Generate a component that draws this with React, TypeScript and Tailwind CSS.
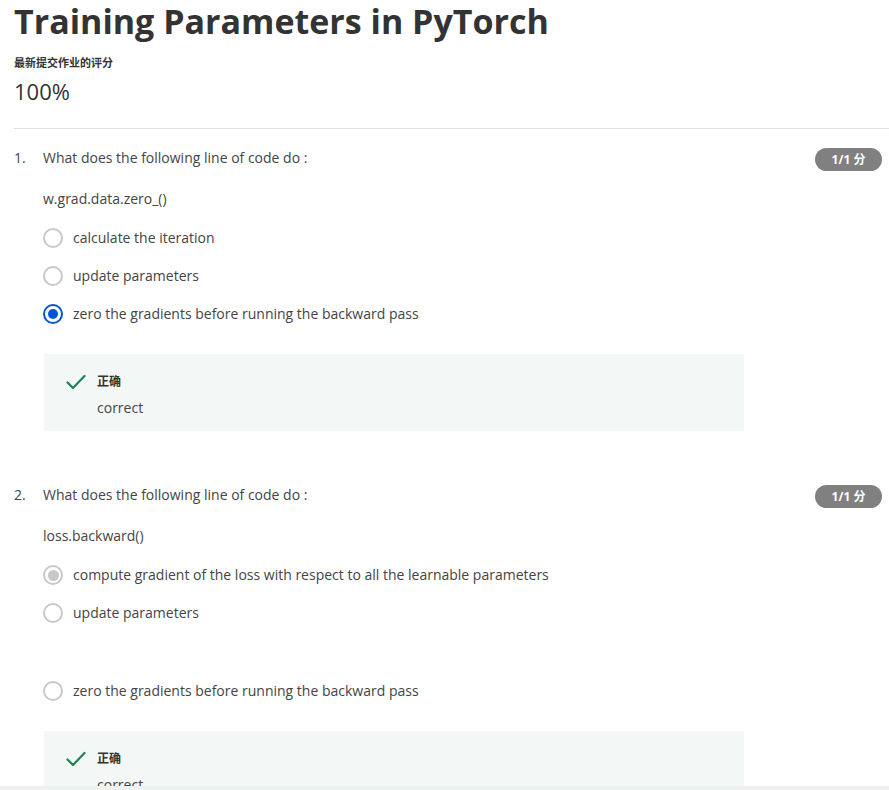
import React from "react";

type Option = { label: string; state?: "selected" | "disabled-selected"; extraTop?: boolean };

type Question = {
  num: number;
  prompt: string;
  code: string;
  options: Option[];
};

const questions: Question[] = [
  {
    num: 1,
    prompt: "What does the following line of code do :",
    code: "w.grad.data.zero_()",
    options: [
      { label: "calculate the iteration" },
      { label: "update parameters" },
      { label: "zero the gradients before running the backward pass", state: "selected" },
    ],
  },
  {
    num: 2,
    prompt: "What does the following line of code do :",
    code: "loss.backward()",
    options: [
      { label: "compute gradient of the loss with respect to all the learnable parameters", state: "disabled-selected" },
      { label: "update parameters" },
      { label: "zero the gradients before running the backward pass", extraTop: true },
    ],
  },
];

function Radio({ state }: { state?: Option["state"] }) {
  if (state === "selected") {
    return (
      <span className="w-5 h-5 rounded-full border-2 border-[#0056d2] flex items-center justify-center shrink-0">
        <span className="w-[10px] h-[10px] rounded-full bg-[#0056d2]" />
      </span>
    );
  }
  if (state === "disabled-selected") {
    return (
      <span className="w-5 h-5 rounded-full border-2 border-[#c8c8c8] flex items-center justify-center shrink-0">
        <span className="w-[11px] h-[11px] rounded-full bg-[#c8c8c8]" />
      </span>
    );
  }
  return <span className="w-5 h-5 rounded-full border-2 border-[#c8c8c8] bg-white shrink-0" />;
}

function Feedback() {
  return (
    <div className="mt-[30px] ml-px w-[700px] h-[77px] bg-[#f3f8f6] pl-[22px] pt-[19px] flex gap-[11px]">
      <svg width="20" height="16" viewBox="0 0 20 16" className="mt-px shrink-0">
        <path d="M1.5 8.5 L7 14 L18.5 2" fill="none" stroke="#1f8354" strokeWidth="2.2" strokeLinecap="round" strokeLinejoin="round" />
      </svg>
      <div>
        <div className="text-[12px] leading-[18px] font-bold text-[#333]">正确</div>
        <div className="text-[14px] leading-[20px] mt-[7px] text-[#444]">correct</div>
      </div>
    </div>
  );
}

function QuestionBlock({ q, first }: { q: Question; first: boolean }) {
  return (
    <div className={first ? "mt-[19px]" : "mt-[54px]"}>
      <div className="flex items-start pr-[7px]">
        <span className="w-[29px] text-[14px] leading-[20px] text-[#444] shrink-0">{q.num}.</span>
        <span className="flex-1 text-[14px] leading-[20px] text-[#444]">{q.prompt}</span>
        <span className="w-[67px] h-[23px] rounded-full bg-[#808080] text-white text-[12px] font-bold flex items-center justify-center">
          1/1 分
        </span>
      </div>
      <div className="ml-[29px]">
        <p className="mt-[18px] text-[14px] leading-[20px] text-[#444]">{q.code}</p>
        <div className="mt-[19px] flex flex-col gap-[18px]">
          {q.options.map((o) => (
            <label
              key={o.label}
              className={"flex items-center gap-[10px] h-5 " + (o.extraTop ? "mt-[40px]" : "")}
            >
              <Radio state={o.state} />
              <span className="text-[14px] leading-[20px] text-[#444]">{o.label}</span>
            </label>
          ))}
        </div>
        <Feedback />
      </div>
    </div>
  );
}

export default function App() {
  return (
    <div
      className="w-[889px] h-[790px] overflow-hidden flex flex-col bg-white"
      style={{ fontFamily: '"Open Sans", "Noto Sans CJK SC", sans-serif' }}
    >
      <div className="h-[786px] overflow-hidden pl-[14px]">
        <h1 className="text-[34px] leading-[42px] font-bold text-[#333]">
          Training Parameters in PyTorch
        </h1>
        <div className="mt-[13px] text-[11px] leading-[16px] font-bold text-[#333]">最新提交作业的评分</div>
        <div className="mt-[5px] text-[22px] leading-[30px] text-[#333]">100%</div>
        <div className="mt-[22px] border-t border-[#e1e1e1]" />
        {questions.map((q, i) => (
          <QuestionBlock key={q.num} q={q} first={i === 0} />
        ))}
      </div>
      <div className="h-1 bg-[#f0f0f0]" />
    </div>
  );
}
